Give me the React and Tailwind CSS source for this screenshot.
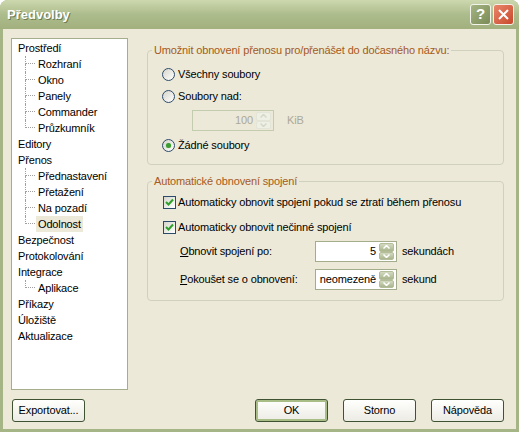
import React from "react";

const tree = [
  { label: "Prostředí", children: ["Rozhraní", "Okno", "Panely", "Commander", "Průzkumník"] },
  { label: "Editory" },
  { label: "Přenos", children: ["Přednastavení", "Přetažení", "Na pozadí", "Odolnost"] },
  { label: "Bezpečnost" },
  { label: "Protokolování" },
  { label: "Integrace", children: ["Aplikace"] },
  { label: "Příkazy" },
  { label: "Úložiště" },
  { label: "Aktualizace" },
];

const selected = "Odolnost";

// dotted branch connector for a child node
function TreeChild({ label, last }) {
  return (
    <div className="flex h-[16px] items-stretch">
      <div className="ml-[13px] flex w-[10px] flex-col">
        <div className="h-[8px] border-b border-l border-dotted border-[#a0a0a0]" />
        <div className={last ? "flex-1" : "flex-1 border-l border-dotted border-[#a0a0a0]"} />
      </div>
      <span className={`ml-[1px] px-[2px] leading-[16px] ${label === selected ? "bg-[#ece9d8]" : ""}`}>{label}</span>
    </div>
  );
}

function TreeView() {
  return (
    <div className="flex w-[117px] flex-col border border-[#a5ae8c] bg-white pt-[1px]">
      {tree.map((node) => (
        <React.Fragment key={node.label}>
          <div className="h-[16px] pl-[6px] leading-[16px]">{node.label}</div>
          {node.children &&
            node.children.map((c, i) => <TreeChild key={c} label={c} last={i === node.children.length - 1} />)}
        </React.Fragment>
      ))}
    </div>
  );
}

function Radio({ checked, children }) {
  return (
    <div className="flex h-[16px] items-center gap-[3px]">
      <span className="flex h-[13px] w-[13px] items-center justify-center rounded-full border border-[#2c4a6b] bg-linear-to-br from-[#d6d5cc] to-white">
        {checked && <span className="h-[5px] w-[5px] rounded-full bg-[#3c9c32] shadow-[0_0_1px_#7fd071]" />}
      </span>
      <span>{children}</span>
    </div>
  );
}

function Checkbox({ children }) {
  return (
    <div className="ml-[1px] flex h-[16px] items-center gap-[2px]">
      <span className="flex h-[13px] w-[13px] items-center justify-center border border-[#2c4a6b] bg-linear-to-br from-[#d6d5cc] to-white">
        <svg width="9" height="9" viewBox="0 0 9 9">
          <path d="M1 4 L3.5 6.5 L8 1.5" stroke="#2fa12a" strokeWidth="2" fill="none" />
        </svg>
      </span>
      <span>{children}</span>
    </div>
  );
}

function SpinHalf({ up, disabled }) {
  return (
    <div
      className={`flex flex-1 items-center justify-center rounded-[2px] border ${
        disabled ? "border-[#e2e5d8] bg-[#eef0e6]" : "border-[#b4bd9a] bg-linear-to-b from-[#d3dac0] to-[#a9b58d]"
      }`}
    >
      <svg width="7" height="4" viewBox="0 0 7 4">
        <path
          d={up ? "M0.5 3.5 L3.5 0.5 L6.5 3.5" : "M0.5 0.5 L3.5 3.5 L6.5 0.5"}
          stroke={disabled ? "#d4d8c8" : "#ffffff"}
          strokeWidth="1.5"
          fill="none"
        />
      </svg>
    </div>
  );
}

function SpinBox({ value, disabled }) {
  return (
    <div
      className={`flex h-[21px] w-[82px] items-center border pr-[2px] ${
        disabled ? "border-[#c4ccb0] text-[#aca899]" : "border-[#a4ad8b] bg-white"
      }`}
    >
      <span className="flex-1 pr-[3px] text-right">{value}</span>
      <div className="flex h-[17px] w-[15px] flex-col">
        <SpinHalf up disabled={disabled} />
        <SpinHalf disabled={disabled} />
      </div>
    </div>
  );
}

function GroupBox({ title, className, children }) {
  return (
    <fieldset className={`rounded-[4px] border border-[#d0d0bf] pl-[14px] ${className}`}>
      <legend className="-ml-[10px] px-[2px] leading-[13px] text-[#a55a22]">{title}</legend>
      {children}
    </fieldset>
  );
}

function Button({ children, isDefault, className = "" }) {
  return (
    <button
      className={`h-[23px] w-[73px] rounded-[3px] border border-[#3f5232] bg-linear-to-b from-[#fffffd] to-[#ecebe4] ${
        isDefault ? "shadow-[inset_0_0_0_2px_#a9bd86]" : ""
      } ${className}`}
    >
      {children}
    </button>
  );
}

export default function App() {
  return (
    <div className="h-[432px] w-[519px] bg-white font-['Liberation_Sans',Arial,sans-serif] text-[11px] text-black">
      <div className="flex h-full flex-col overflow-hidden rounded-t-[8px] bg-[#a6b585]">
        {/* title bar */}
        <div className="flex h-[29px] items-center bg-linear-to-b from-[#cdd8ae] via-[#adbc8c] to-[#a1b07d] pl-[7px] pr-[5px]">
          <span className="text-[13px] font-bold text-white [text-shadow:1px_1px_0_#6e7d52]">Předvolby</span>
          <div className="ml-auto flex gap-[2px]">
            <div className="flex h-[21px] w-[21px] items-center justify-center rounded-[3px] border border-[#f2f4ec] bg-linear-to-br from-[#a4b482] to-[#7b8c58] text-[15px] font-bold text-white">
              ?
            </div>
            <div className="flex h-[21px] w-[21px] items-center justify-center rounded-[3px] border border-[#f6efe8] bg-linear-to-br from-[#e9866a] to-[#c8472a]">
              <svg width="11" height="11" viewBox="0 0 11 11">
                <path d="M1 1 L10 10 M10 1 L1 10" stroke="white" strokeWidth="2" />
              </svg>
            </div>
          </div>
        </div>

        {/* client area */}
        <div className="mx-[3px] mb-[3px] flex flex-1 flex-col bg-[#ece9d8] pl-[8px] pr-[12px] pt-[9px] tracking-[-0.15px]">
          <div className="flex h-[352px]">
            <TreeView />
            <div className="ml-[19px] flex flex-1 flex-col pt-[6px]">
              <GroupBox title="Umožnit obnovení přenosu pro/přenášet do dočasného názvu:" className="pb-[11px] pt-[9px]">
                <div className="flex flex-col gap-[6px]">
                  <Radio>Všechny soubory</Radio>
                  <Radio>Soubory nad:</Radio>
                  <div className="ml-[30px] flex items-center gap-[13px]">
                    <SpinBox value="100" disabled />
                    <span className="text-[#aca899]">KiB</span>
                  </div>
                  <Radio checked>Žádné soubory</Radio>
                </div>
              </GroupBox>

              <GroupBox title="Automatické obnovení spojení" className="mt-[10px] pb-[10px] pt-[6px]">
                <div className="flex flex-col">
                  <Checkbox>Automaticky obnovit spojení pokud se ztratí během přenosu</Checkbox>
                  <div className="mt-[9px]">
                    <Checkbox>Automaticky obnovit nečinné spojení</Checkbox>
                  </div>
                  <div className="ml-[18px] mt-[6px] flex items-center">
                    <span className="w-[135px]">
                      <u>O</u>bnovit spojení po:
                    </span>
                    <SpinBox value="5" />
                    <span className="ml-[5px]">sekundách</span>
                  </div>
                  <div className="ml-[18px] mt-[7px] flex items-center">
                    <span className="w-[135px]">
                      <u>P</u>okoušet se o obnovení:
                    </span>
                    <SpinBox value="neomezeně" />
                    <span className="ml-[5px]">sekund</span>
                  </div>
                </div>
              </GroupBox>
            </div>
          </div>

          {/* dialog buttons */}
          <div className="mt-[9px] flex">
            <Button className="ml-[1px]">Exportovat...</Button>
            <div className="ml-auto flex gap-[15px]">
              <Button isDefault>OK</Button>
              <Button>Storno</Button>
              <Button>Nápověda</Button>
            </div>
          </div>
        </div>
      </div>
    </div>
  );
}
